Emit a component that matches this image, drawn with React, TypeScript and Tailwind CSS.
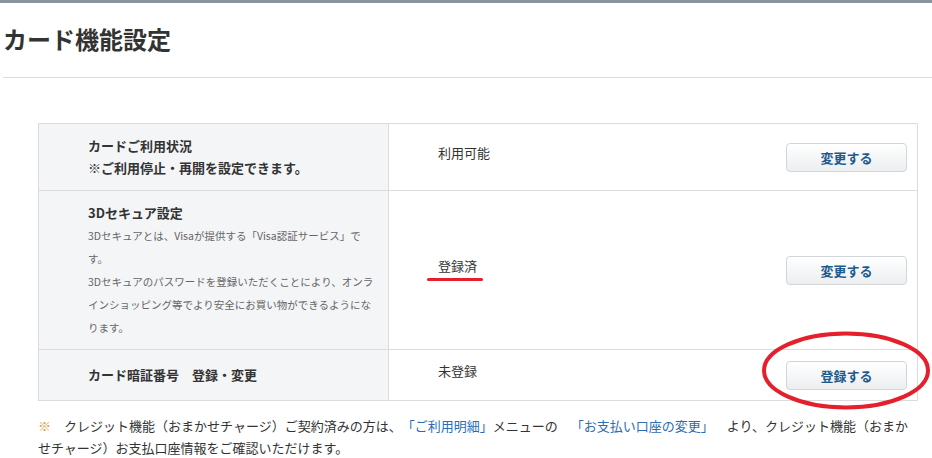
import React from 'react';

const font = { fontFamily: '"Noto Sans CJK JP", "Noto Sans", sans-serif' };

type Row = {
  key: string;
  height: string;
  left: React.ReactNode;
  value: string;
  button: string;
  underline?: boolean;
};

const ActionButton = ({ label }: { label: string }) => (
  <button className="w-[121px] h-[29px] rounded-[4px] border border-[#d3d6d9] bg-linear-to-b from-white to-[#eceef0] text-[13px] font-bold text-[#1d5b8e] leading-none">
    {label}
  </button>
);

const rows: Row[] = [
  {
    key: 'status',
    height: 'h-[67px]',
    left: (
      <div className="text-[13px] font-bold leading-[22px] text-[#333]">
        <p>カードご利用状況</p>
        <p>※ご利用停止・再開を設定できます。</p>
      </div>
    ),
    value: '利用可能',
    button: '変更する',
  },
  {
    key: '3ds',
    height: 'h-[159px]',
    left: (
      <div>
        <p className="text-[13px] font-bold leading-[22px] text-[#333]">3Dセキュア設定</p>
        <p className="text-[10.5px] leading-[23px] text-[#666]">
          3Dセキュアとは、Visaが提供する「Visa認証サービス」です。
        </p>
        <p className="text-[10.5px] leading-[23px] text-[#666]">
          3Dセキュアのパスワードを登録いただくことにより、オンラインショッピング等でより安全にお買い物ができるようになります。
        </p>
      </div>
    ),
    value: '登録済',
    button: '変更する',
    underline: true,
  },
  {
    key: 'pin',
    height: 'h-[50px]',
    left: (
      <p className="text-[13px] font-bold leading-[22px] text-[#333]">カード暗証番号　登録・変更</p>
    ),
    value: '未登録',
    button: '登録する',
  },
];

export default function App() {
  return (
    <div
      className="relative w-[932px] h-[458px] bg-white overflow-hidden [text-spacing-trim:space-all]"
      style={font}
    >
      {/* top strip */}
      <div className="h-[3px] bg-[#89939c]"></div>

      {/* page title */}
      <div className="pl-[3px]">
        <h1 className="pt-[18px] pb-[20px] text-[24px] font-bold leading-[36px] text-[#333]">
          カード機能設定
        </h1>
        <div className="h-px bg-[#dcdcdc]"></div>
      </div>

      {/* settings table */}
      <div className="ml-[38px] mt-[45px] w-[880px] border border-[#dcdcdc]">
        {rows.map((row, i) => (
          <div
            key={row.key}
            className={`flex ${row.height} ${i < rows.length - 1 ? 'border-b border-[#dcdcdc]' : ''}`}
          >
            <div className="w-[350px] shrink-0 bg-[#f4f5f7] border-r border-[#dcdcdc] pl-[49px] pr-[14px] flex flex-col justify-center">
              {row.left}
            </div>
            <div className="flex-1 flex items-center justify-between pl-[49px] pr-[10px]">
              <span className="relative mb-[8px] text-[13px] text-[#333]">
                {row.value}
                {row.underline && (
                  <span className="absolute left-[-11px] top-[22px] w-[56px] h-[3px] rounded-full bg-[#e51f2b]"></span>
                )}
              </span>
              <ActionButton label={row.button} />
            </div>
          </div>
        ))}
      </div>

      {/* footnote */}
      <p className="ml-[38px] mt-[14px] w-[880px] text-[13px] leading-[22px] text-[#333]">
        <span className="text-[#e39a45]">※</span>
        {'　クレジット機能（おまかせチャージ）ご契約済みの方は、'}
        <span className="text-[#2a6db3]">「ご利用明細」</span>
        {'メニューの　'}
        <span className="text-[#2a6db3]">「お支払い口座の変更」</span>
        {'　より、クレジット機能（おまかせチャージ）お支払口座情報をご確認いただけます。'}
      </p>

      {/* red annotation circle */}
      <svg
        className="absolute left-[760px] top-[330px] pointer-events-none"
        width="172"
        height="81"
        viewBox="0 0 172 81"
      >
        <ellipse cx="86" cy="40.5" rx="82" ry="37" fill="none" stroke="#e51f2b" strokeWidth="4" />
      </svg>
    </div>
  );
}
